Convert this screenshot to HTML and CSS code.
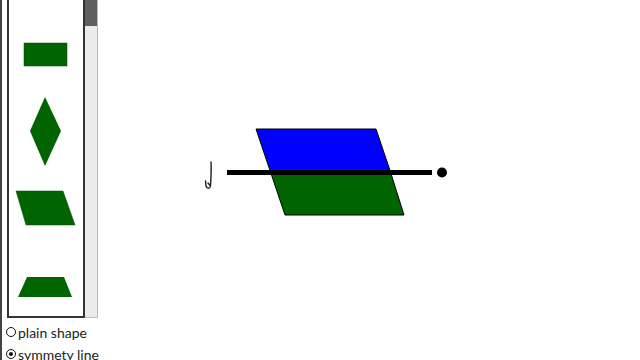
FILE: index.html
```html
<!DOCTYPE html>
<html lang="en">
<head>
  <meta charset="UTF-8" />
  <title>Symmetry</title>
  <link rel="stylesheet" href="styles.css">
</head>
<body>
  <div class="sidebar">
    <div class="picker">
      <div class="shapes">
        <svg width="75" height="318" viewBox="9 0 75 318">
          <polygon points="30,0 60,0 55,5 35,5" fill="#006400" stroke="#fff" stroke-width="6"/>
          <rect x="24" y="43" width="43" height="23" fill="#006400" stroke="#004d00" stroke-width="0.5"/>
          <polygon points="45,97 61,131 45,166 30,131" fill="#006400"/>
          <polygon points="16,191 63,191 75,225 26,225" fill="#006400" stroke="#004d00" stroke-width="0.5"/>
          <polygon points="27,277 64,277 72,297 18,297" fill="#006400"/>
        </svg>
      </div>
      <div class="scrollbar"><div class="thumb"></div></div>
    </div>
    <div class="options">
      <label class="opt"><span class="radio"></span>plain shape</label>
      <label class="opt"><span class="radio on"></span>symmety line</label>
    </div>
  </div>
  <svg class="canvas" width="542" height="360" viewBox="98 0 542 360">
    <polygon points="256,129 376,129 390.5,172 270.5,172" fill="#0000ff" stroke="#000" stroke-width="1"/>
    <polygon points="270.5,172 390.5,172 404,215 285,215" fill="#006400" stroke="#000" stroke-width="1"/>
    <line x1="227" y1="172.5" x2="432" y2="172.5" stroke="#000" stroke-width="5"/>
    <circle cx="442" cy="172.5" r="5" fill="#000"/>
    <path d="M211 162 C211.5 170 211 178 210.5 186 C210 189 207 189 206 186 L205.5 181 M210.5 186 L208 183" fill="none" stroke="#222" stroke-width="1.4" stroke-linecap="round"/>
  </svg>
</body>
</html>
```

FILE: styles.css
```css
html, body {
  margin: 0;
  padding: 0;
  height: 360px;
  overflow: hidden;
  background: #fff;
}
body {
  display: flex;
  border-left: 2px solid #444;
  box-sizing: border-box;
  width: 640px;
  font-family: Lato, sans-serif;
  color: #222;
}
.sidebar {
  width: 96px;
  flex-shrink: 0;
}
.picker {
  display: flex;
  height: 318px;
  margin-left: 5px;
}
.shapes {
  width: 75px;
  border: 2px solid #333;
  border-top: none;
  overflow: hidden;
}
.shapes svg {
  display: block;
}
.scrollbar {
  width: 12px;
  background: #ebebeb;
  border-right: 1px solid #bbb;
  border-bottom: 1px solid #bbb;
}
.thumb {
  height: 26px;
  background: #5f5f5f;
}
.options {
  padding-top: 3px;
}
.opt {
  display: flex;
  align-items: center;
  height: 22px;
  font-size: 14px;
  white-space: nowrap;
  margin-left: 4px;
}
.radio {
  width: 8px;
  height: 8px;
  border: 1.5px solid #111;
  border-radius: 50%;
  margin-right: 2px;
  position: relative;
  flex-shrink: 0;
}
.radio.on::after {
  content: "";
  position: absolute;
  left: 2px;
  top: 2px;
  width: 4px;
  height: 4px;
  border-radius: 50%;
  background: #111;
}
.canvas {
  display: block;
  flex-shrink: 0;
}
```
